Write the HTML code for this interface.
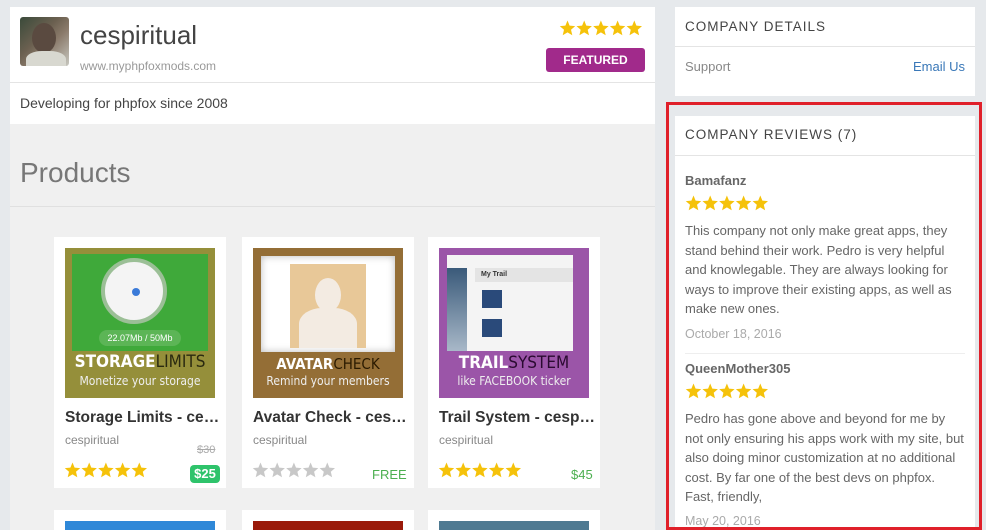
<!DOCTYPE html>
<html style="width:986px;height:530px;overflow:hidden"><head><meta charset="utf-8">
<style>
*{margin:0;padding:0;box-sizing:border-box}
body{width:986px;height:530px;overflow:hidden;background:#e6e9ec;font-family:"Liberation Sans",sans-serif;position:relative}
.a{position:absolute}
.card{position:absolute;background:#fff;width:172px;height:251px;top:237px;overflow:hidden}
.card .img{position:absolute;left:11px;top:11px;width:150px;height:150px;overflow:hidden}
.card .t{position:absolute;left:11px;top:172px;font-size:15.5px;font-weight:bold;color:#333;white-space:nowrap;width:160px;overflow:hidden;text-overflow:ellipsis}
.card .s{position:absolute;left:11px;top:196px;font-size:12px;color:#888}
.big{position:absolute;left:0;width:150px;text-align:center;font-family:"DejaVu Sans Condensed","DejaVu Sans",sans-serif}
.sub{position:absolute;left:0;width:150px;text-align:center;font-size:12px;color:#eee;font-family:"DejaVu Sans Condensed","DejaVu Sans",sans-serif}
.rv{font-size:13px;color:#666;line-height:19.5px;white-space:nowrap}
</style></head><body>
<svg width="0" height="0" style="position:absolute"><defs>
<path id="s" d="M8.5 0.5 L10.6 5.6 L16.2 6.1 L12 9.8 L13.3 15.3 L8.5 12.4 L3.7 15.3 L5 9.8 L0.8 6.1 L6.4 5.6 Z"/>
<g id="five"><use href="#s"/><use href="#s" x="16.7"/><use href="#s" x="33.4"/><use href="#s" x="50.1"/><use href="#s" x="66.8"/></g>
</defs></svg>
<div class="a" style="left:10px;top:7px;width:645px;height:117px;background:#fff"></div>
<div class="a" style="left:10px;top:82px;width:645px;height:1px;background:#e4e4e4"></div>
<div class="a" style="left:20px;top:17px;width:49px;height:49px;border-radius:3px;background:linear-gradient(135deg,#3a4a3a,#6b6050 40%,#8a7a6a 60%,#c8c8c0);overflow:hidden">
<div class="a" style="left:12px;top:6px;width:24px;height:30px;border-radius:50%;background:#5a4a40"></div>
<div class="a" style="left:6px;top:34px;width:40px;height:20px;border-radius:40% 40% 0 0;background:#d8d8d0"></div></div>
<div class="a" style="left:80px;top:20px;font-size:26px;color:#444">cespiritual</div>
<div class="a" style="left:80px;top:59px;font-size:12px;color:#999">www.myphpfoxmods.com</div>
<svg class="a" style="left:559px;top:20px" width="84" height="17" fill="#f5c20a"><use href="#five"/></svg>
<div class="a" style="left:546px;top:48px;width:99px;height:24px;background:#a12a8b;border-radius:3px;color:#fff;font-size:12px;font-weight:bold;text-align:center;line-height:24px">FEATURED</div>
<div class="a" style="left:20px;top:95px;font-size:14px;color:#444">Developing for phpfox since 2008</div>
<div class="a" style="left:10px;top:124px;width:645px;height:406px;background:#f0f0f0"></div>
<div class="a" style="left:20px;top:157px;font-size:28px;color:#777">Products</div>
<div class="a" style="left:10px;top:206px;width:645px;height:1px;background:#e0e0e0"></div>

<div class="card" style="left:54px">
 <div class="img" style="background:#958f3a">
  <div class="a" style="left:7px;top:6px;width:136px;height:97px;background:#3fa93a"></div>
  <div class="a" style="left:36px;top:10px;width:66px;height:66px;border-radius:50%;background:#f4f4f4;border:4px solid #9bbf96"></div>
  <div class="a" style="left:67px;top:40px;width:8px;height:8px;border-radius:50%;background:#3a7ad8"></div>
  <div class="a" style="left:34px;top:82px;width:82px;height:16px;border-radius:8px;background:#5cb556;color:#fff;font-size:9px;text-align:center;line-height:16px">22.07Mb / 50Mb</div>
  <div class="big" style="top:104px;font-size:17px;font-weight:bold;color:#fff">STORAGE<span style="font-weight:normal;color:#2a2a10">LIMITS</span></div>
  <div class="sub" style="top:126px">Monetize your storage</div>
 </div>
 <div class="t">Storage Limits - cespiritual</div>
 <div class="s">cespiritual</div>
 <div class="a" style="left:143px;top:207px;font-size:11px;color:#aaa;text-decoration:line-through">$30</div>
 <svg class="a" style="left:10px;top:225px" width="84" height="17" fill="#f5c20a"><use href="#five"/></svg>
 <div class="a" style="left:136px;top:228px;width:30px;height:18px;background:#2ec36b;border-radius:4px;color:#fff;font-size:13px;font-weight:bold;text-align:center;line-height:18px">$25</div>
</div>

<div class="card" style="left:242px">
 <div class="img" style="background:#946e36">
  <div class="a" style="left:8px;top:8px;width:134px;height:96px;background:#fff;box-shadow:inset 0 0 8px #bbb"></div>
  <div class="a" style="left:37px;top:16px;width:76px;height:84px;background:#e8c898"></div>
  <div class="a" style="left:62px;top:30px;width:26px;height:34px;border-radius:50%;background:#f3ebe2"></div>
  <div class="a" style="left:46px;top:60px;width:58px;height:40px;border-radius:40% 40% 0 0;background:#f3ebe2"></div>
  <div class="big" style="top:107px;font-size:15px;font-weight:bold;color:#fff">AVATAR<span style="font-weight:normal;color:#2a1a00">CHECK</span></div>
  <div class="sub" style="top:126px">Remind your members</div>
 </div>
 <div class="t">Avatar Check - cespiritual</div>
 <div class="s">cespiritual</div>
 <svg class="a" style="left:10px;top:225px" width="84" height="17" fill="#c8c8c8"><use href="#five"/></svg>
 <div class="a" style="left:130px;top:230px;font-size:13px;color:#4caf50">FREE</div>
</div>

<div class="card" style="left:428px">
 <div class="img" style="background:#9b55a8">
  <div class="a" style="left:8px;top:7px;width:126px;height:96px;background:#f4f4f4"></div>
  <div class="a" style="left:8px;top:20px;width:20px;height:83px;background:linear-gradient(#3a5a7a,#a8b8c8)"></div>
  <div class="a" style="left:36px;top:20px;width:98px;height:14px;background:#e4e4e4;font-size:7px;font-weight:bold;line-height:14px;padding-left:6px;color:#333">My Trail</div>
  <div class="a" style="left:43px;top:42px;width:20px;height:18px;background:#2a4a7a"></div>
  <div class="a" style="left:43px;top:71px;width:20px;height:18px;background:#2a4a7a"></div>
  <div class="big" style="top:105px;font-size:17px;font-weight:bold;color:#fff">TRAIL<span style="font-weight:normal;color:#2a0a30">SYSTEM</span></div>
  <div class="sub" style="top:126px">like FACEBOOK ticker</div>
 </div>
 <div class="t">Trail System - cespiritual</div>
 <div class="s">cespiritual</div>
 <svg class="a" style="left:10px;top:225px" width="84" height="17" fill="#f5c20a"><use href="#five"/></svg>
 <div class="a" style="left:143px;top:230px;font-size:13px;color:#4caf50">$45</div>
</div>

<div class="card" style="left:54px;top:510px;height:20px"><div class="img" style="background:#2f88d8"></div></div>
<div class="card" style="left:242px;top:510px;height:20px"><div class="img" style="background:#9a1a0a"></div></div>
<div class="card" style="left:428px;top:510px;height:20px"><div class="img" style="background:#4f7a92"></div></div>

<div class="a" style="left:675px;top:7px;width:300px;height:89px;background:#fff"></div>
<div class="a" style="left:685px;top:19px;font-size:13.5px;letter-spacing:1px;color:#444">COMPANY DETAILS</div>
<div class="a" style="left:675px;top:46px;width:300px;height:1px;background:#e4e4e4"></div>
<div class="a" style="left:685px;top:59px;font-size:13px;color:#888">Support</div>
<div class="a" style="left:913px;top:59px;font-size:13px;color:#3a78b8">Email Us</div>

<div class="a" style="left:666px;top:102px;width:316px;height:428px;border:3px solid #e0202a;border-bottom:0"></div>
<div class="a" style="left:675px;top:116px;width:300px;height:411px;background:#fff"></div>
<div class="a" style="left:685px;top:127px;font-size:13.5px;letter-spacing:1px;color:#444">COMPANY REVIEWS (7)</div>
<div class="a" style="left:675px;top:155px;width:300px;height:1px;background:#e4e4e4"></div>
<div class="a" style="left:685px;top:173px;font-size:13px;font-weight:bold;color:#666">Bamafanz</div>
<svg class="a" style="left:685px;top:195px" width="84" height="17" fill="#f5c20a"><use href="#five"/></svg>
<div class="a rv" style="left:685px;top:221px">This company not only make great apps, they<br>stand behind their work. Pedro is very helpful<br>and knowlegable. They are always looking for<br>ways to improve their existing apps, as well as<br>make new ones.</div>
<div class="a" style="left:685px;top:327px;font-size:12.5px;color:#aaa">October 18, 2016</div>
<div class="a" style="left:685px;top:353px;width:280px;height:1px;background:#eee"></div>
<div class="a" style="left:685px;top:361px;font-size:13px;font-weight:bold;color:#666">QueenMother305</div>
<svg class="a" style="left:685px;top:383px" width="84" height="17" fill="#f5c20a"><use href="#five"/></svg>
<div class="a rv" style="left:685px;top:409px">Pedro has gone above and beyond for me by<br>not only ensuring his apps work with my site, but<br>also doing minor customization at no additional<br>cost. By far one of the best devs on phpfox.<br>Fast, friendly,</div>
<div class="a" style="left:685px;top:514px;font-size:12.5px;color:#aaa">May 20, 2016</div>
<div class="a" style="left:666px;top:527px;width:316px;height:3px;background:#e0202a"></div>
</body></html>
